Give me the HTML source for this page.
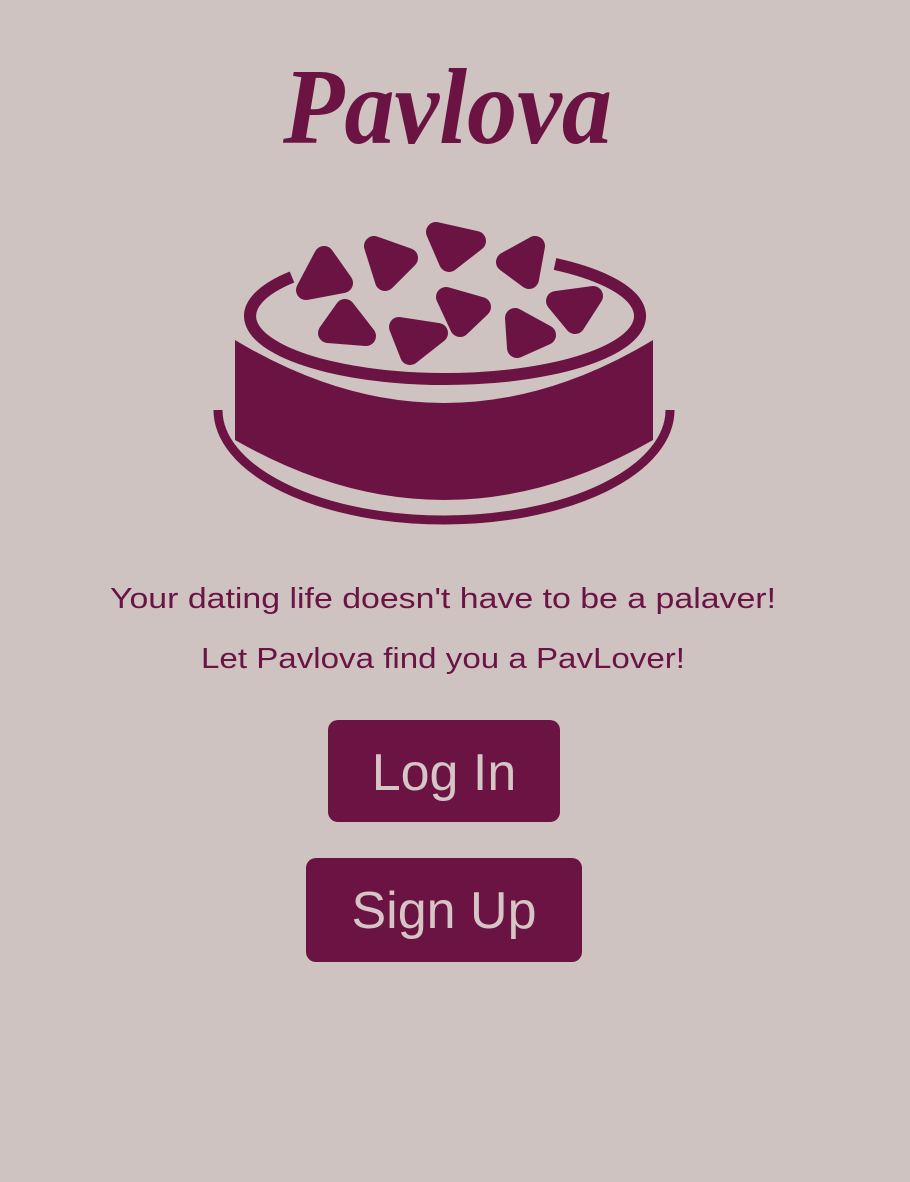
<!DOCTYPE html>
<html><head><meta charset="utf-8"><style>
html,body{margin:0;padding:0;background:#cfc3c2;width:910px;height:1182px;overflow:hidden}
svg{position:absolute;left:0;top:0}
</style></head><body>
<svg width="910" height="1182" viewBox="0 0 910 1182">
<text x="283" y="143" font-family="Liberation Serif, serif" font-style="italic" font-weight="bold" font-size="108" fill="#6b1443" textLength="329" lengthAdjust="spacingAndGlyphs">Pavlova</text>
<g fill="#6b1443">
<path d="M555,264 A195,63 0 1 1 292,277" fill="none" stroke="#6b1443" stroke-width="12"/>
<path d="M235,340 Q444,466 653,340 L653,440 Q444,560 235,440 Z"/>
<path d="M218,410 A226,110 0 0 0 670,410" fill="none" stroke="#6b1443" stroke-width="9"/>
<g stroke="#6b1443" stroke-width="20" stroke-linejoin="round">
<polygon points="324,256 306,290 343,283"/>
<polygon points="374,246 385,281 408,258"/>
<polygon points="436,232 449,262 476,241"/>
<polygon points="506,262 535,246 529,279"/>
<polygon points="328,333 345,309 366,336"/>
<polygon points="399,327 410,355 438,333"/>
<polygon points="446,297 481,307 460,327"/>
<polygon points="515,318 517,348 546,335"/>
<polygon points="556,301 593,296 575,324"/>
</g>
</g>
<g font-family="Liberation Sans, sans-serif" font-size="29" fill="#6b1443" text-anchor="middle">
<text x="443" y="608" textLength="666" lengthAdjust="spacingAndGlyphs">Your dating life doesn't have to be a palaver!</text>
<text x="443" y="668" textLength="484" lengthAdjust="spacingAndGlyphs">Let Pavlova find you a PavLover!</text>
</g>
<rect x="328" y="720" width="232" height="102" rx="10" fill="#6b1443"/>
<rect x="306" y="858" width="276" height="104" rx="10" fill="#6b1443"/>
<g font-family="Liberation Sans, sans-serif" font-size="52" fill="#d5c5c5" text-anchor="middle">
<text x="444" y="790">Log In</text>
<text x="444" y="928">Sign Up</text>
</g>
</svg>
</body></html>
